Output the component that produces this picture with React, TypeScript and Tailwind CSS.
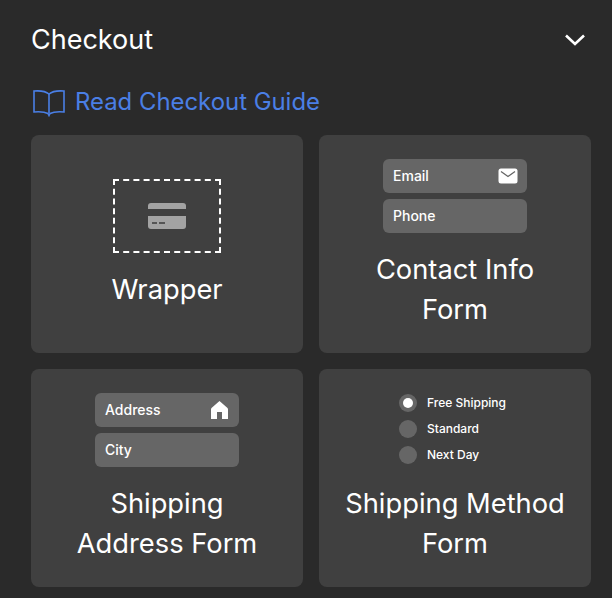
const font = "font-['Inter',sans-serif]";

const Field = ({ label, icon }: { label: string; icon?: React.ReactNode }) => (
  <div className="flex items-center justify-between w-[144px] h-[34px] pl-[10px] pr-[9px] rounded-[6px] bg-[#666666]">
    <span className="mb-[2px] text-[14px] font-medium text-white">{label}</span>
    {icon}
  </div>
);

const MailIcon = () => (
  <svg width="20" height="16" viewBox="0 0 20 16">
    <rect x="0.5" y="0.5" width="19" height="15" rx="2.5" fill="#fff" />
    <path d="M3 3.5 L10 8.5 L17 3.5" fill="none" stroke="#666" strokeWidth="1.3" />
  </svg>
);

const HomeIcon = () => (
  <svg className="mr-[2px]" width="17" height="18" viewBox="0 0 17 18">
    <path d="M8.5 0 L16.5 7 Q17 7.5 17 8.5 V18 H11 V11 H6 V18 H0 V8.5 Q0 7.5 0.5 7 Z" fill="#fff" />
  </svg>
);

const Radio = ({ label, on }: { label: string; on?: boolean }) => (
  <div className="flex items-center gap-[10px] h-[18px]">
    <div className="flex items-center justify-center w-[18px] h-[18px] rounded-full bg-[#666666]">
      {on && <div className="w-[10px] h-[10px] rounded-full bg-white" />}
    </div>
    <span className="text-[12px] font-medium text-white">{label}</span>
  </div>
);

const Card = ({ title, children }: { title: string; children: React.ReactNode }) => (
  <div className="flex flex-col items-center h-[218px] rounded-[8px] bg-[#404040]">
    {children}
    <div className="text-[27.3px] leading-[40px] text-white text-center whitespace-pre-line">{title}</div>
  </div>
);

export default function App() {
  return (
    <div className={`${font} w-[612px] h-[598px] overflow-hidden bg-[#2a2a2a] pl-[31px] pr-[21px]`}>
      <div className="flex items-center justify-between h-[80px] pr-[5px]">
        <span className="text-[27px] text-white">Checkout</span>
        <svg width="22" height="14" viewBox="0 0 22 14" fill="none">
          <path d="M2 2.5 L11 11 L20 2.5" stroke="#fff" strokeWidth="2.6" />
        </svg>
      </div>
      <div className="flex items-center gap-[10px] h-[48px] -mt-[1px] pb-[1px] mb-[8px] pl-[2px]">
        <svg width="32" height="28" viewBox="0 0 32 28" fill="none" stroke="#4a7fe5" strokeWidth="1.6">
          <path d="M16 5 C13 2.5 7 1.5 1 2 V23 C7 22.5 12 23 15 24.5 L16 26.5 L17 24.5 C20 23 25 22.5 31 23 V2 C25 1.5 19 2.5 16 5 Z" />
          <path d="M16 5 V24" />
        </svg>
        <span className="mb-[2px] text-[23.9px] text-[#4a7fe5]">Read Checkout Guide</span>
      </div>
      <div className="grid grid-cols-2 gap-[16px]">
        <Card title="Wrapper">
          <div className="flex items-center justify-center w-[108px] h-[74px] mt-[44px] mb-[17px] border-2 border-dashed border-white">
            <svg width="38" height="26" viewBox="0 0 38 26">
              <path d="M0 6 V3 Q0 0 3 0 H35 Q38 0 38 3 V6 Z" fill="#a3a3a3" />
              <path d="M0 13 H38 V23 Q38 26 35 26 H3 Q0 26 0 23 Z" fill="#a3a3a3" />
              <rect x="4" y="19" width="5" height="2" fill="#555" />
              <rect x="11" y="19" width="6" height="2" fill="#555" />
            </svg>
          </div>
        </Card>
        <Card title={"Contact Info\nForm"}>
          <div className="flex flex-col gap-[6px] mt-[24px] mb-[17px]">
            <Field label="Email" icon={<MailIcon />} />
            <Field label="Phone" />
          </div>
        </Card>
        <Card title={"Shipping\nAddress Form"}>
          <div className="flex flex-col gap-[6px] mt-[24px] mb-[17px]">
            <Field label="Address" icon={<HomeIcon />} />
            <Field label="City" />
          </div>
        </Card>
        <Card title={"Shipping Method\nForm"}>
          <div className="flex flex-col gap-[8px] mt-[25px] mb-[20px] mr-[5px]">
            <Radio label="Free Shipping" on />
            <Radio label="Standard" />
            <Radio label="Next Day" />
          </div>
        </Card>
      </div>
    </div>
  );
}
